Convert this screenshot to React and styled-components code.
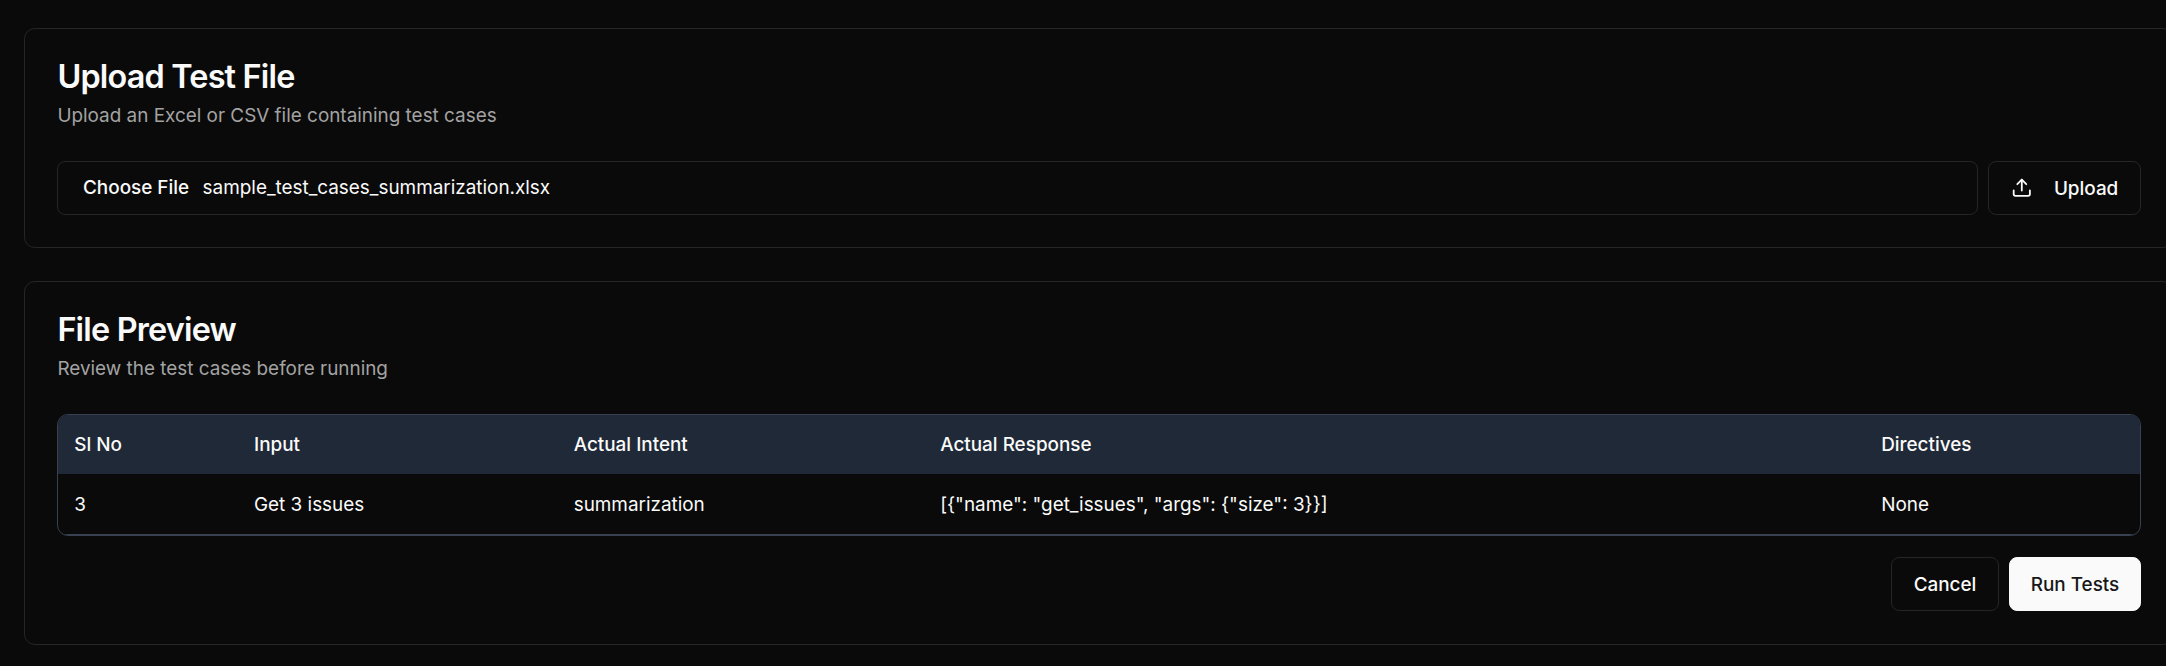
import React from 'react';
import styled, { createGlobalStyle } from 'styled-components';

const GlobalStyle = createGlobalStyle`
  *, *::before, *::after { box-sizing: border-box; }
  body {
    margin: 0;
    background: #0a0a0a;
    color: #fafafa;
    font-family: Inter, "Liberation Sans", sans-serif;
    font-size: 18.9px;
    line-height: 27px;
    overflow: hidden;
  }
`;

const Page = styled.main`
  display: flex;
  flex-direction: column;
  gap: 33px;
  width: 2198px;
  min-height: 666px;
  padding: 28px 24px 0;
  background: #0a0a0a;
`;

const Card = styled.section`
  height: ${(p) => p.$height}px;
  padding: 32px;
  border: 1px solid #262626;
  border-radius: 10.8px;
`;

const CardHeader = styled.header`
  display: flex;
  flex-direction: column;
  gap: 9px;
  height: 100px;
  padding-left: 0.4px;
`;

const Title = styled.h3`
  margin: 0;
  font-size: 32.4px;
  font-weight: 600;
  line-height: 32px;
  letter-spacing: -0.81px;
`;

const Description = styled.p`
  margin: 0;
  color: #a3a3a3;
`;

const UploadRow = styled.div`
  display: flex;
  gap: 10px;
`;

const FileField = styled.div`
  display: flex;
  flex: 1;
  gap: 13.5px;
  height: 54px;
  padding: 12px 25px;
  border: 1px solid #262626;
  border-radius: 8.1px;
`;

const FileButton = styled.span`
  font-weight: 500;
`;

const Button = styled.button`
  display: inline-flex;
  align-items: center;
  justify-content: center;
  gap: 21.6px;
  width: ${(p) => p.$width}px;
  height: 54px;
  padding: 0;
  border: 1px solid ${(p) => (p.$primary ? '#fafafa' : '#262626')};
  border-radius: 8.1px;
  background: ${(p) => (p.$primary ? '#fafafa' : '#0a0a0a')};
  color: ${(p) => (p.$primary ? '#171717' : '#fafafa')};
  font: 500 18.9px/27px Inter, "Liberation Sans", sans-serif;
`;

const ButtonLabel = styled.span`
  padding-top: 1px;
`;

const TableFrame = styled.div`
  border: 1px solid #374151;
  border-radius: 10.8px;
  overflow: hidden;
`;

const Table = styled.div`
  display: grid;
  grid-template-columns: 179.8px 319.7px 366.5px 941px 1fr;
`;

const HeadCell = styled.div`
  height: 59px;
  padding: 16px 16.2px;
  background: #1f2937;
  font-weight: 500;
`;

const Cell = styled.div`
  height: 61px;
  padding: 17px 16.2px 16px;
  border-bottom: 1px solid #374151;
`;

const Actions = styled.footer`
  display: flex;
  justify-content: flex-end;
  gap: 10px;
  margin-top: 21px;
`;

const UploadIcon = () => (
  <svg
    width="21.6"
    height="21.6"
    viewBox="0 0 24 24"
    fill="none"
    stroke="currentColor"
    strokeWidth="2"
    strokeLinecap="round"
    strokeLinejoin="round"
  >
    <path d="M21 15v4a2 2 0 0 1-2 2H5a2 2 0 0 1-2-2v-4" />
    <polyline points="17 8 12 3 7 8" />
    <line x1="12" x2="12" y1="3" y2="15" />
  </svg>
);

const columns = ['Sl No', 'Input', 'Actual Intent', 'Actual Response', 'Directives'];
const row = ['3', 'Get 3 issues', 'summarization', '[{"name": "get_issues", "args": {"size": 3}}]', 'None'];

export default function App() {
  return (
    <>
      <GlobalStyle />
      <Page>
        <Card $height={220}>
          <CardHeader>
            <Title>Upload Test File</Title>
            <Description>Upload an Excel or CSV file containing test cases</Description>
          </CardHeader>
          <UploadRow>
            <FileField>
              <FileButton>Choose File</FileButton>
              <span>sample_test_cases_summarization.xlsx</span>
            </FileField>
            <Button $width={153}>
              <UploadIcon />
              <ButtonLabel>Upload</ButtonLabel>
            </Button>
          </UploadRow>
        </Card>
        <Card $height={364}>
          <CardHeader>
            <Title>File Preview</Title>
            <Description>Review the test cases before running</Description>
          </CardHeader>
          <TableFrame>
            <Table>
              {columns.map((c) => <HeadCell key={c}>{c}</HeadCell>)}
              {row.map((c) => <Cell key={c}>{c}</Cell>)}
            </Table>
          </TableFrame>
          <Actions>
            <Button $width={108}><ButtonLabel>Cancel</ButtonLabel></Button>
            <Button $width={132} $primary><ButtonLabel>Run Tests</ButtonLabel></Button>
          </Actions>
        </Card>
      </Page>
    </>
  );
}
